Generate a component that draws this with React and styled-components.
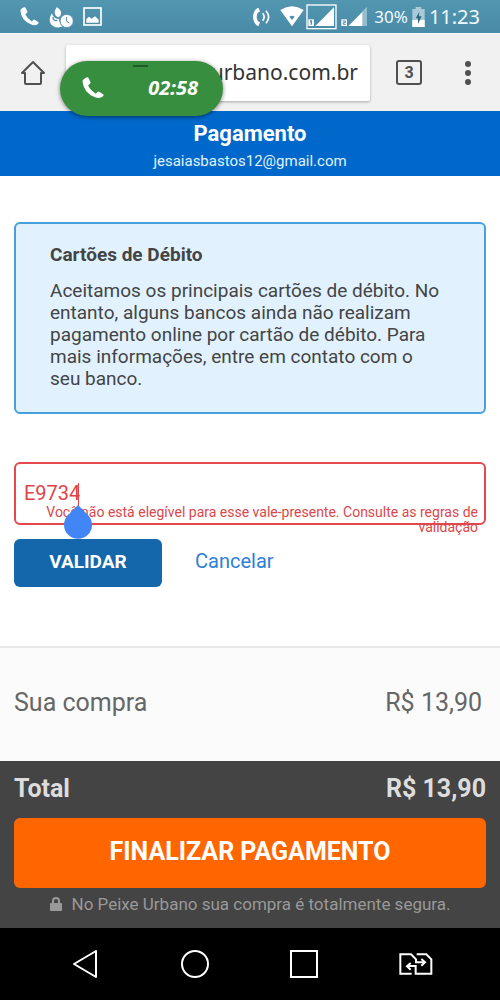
import React from "react";
import styled, { createGlobalStyle } from "styled-components";

const GlobalStyle = createGlobalStyle`
    * {
        box-sizing: border-box;
    }
    body {
        margin: 0;
        background-color: #fff;
        font-family: Roboto, "Liberation Sans", sans-serif;
    }
    h1, h2, p {
        margin: 0;
    }
    svg {
        display: block;
        flex-shrink: 0;
    }
    button, input {
        font-family: inherit;
    }
`;

const Screen = styled.div`
    position: relative;
    display: flex;
    flex-direction: column;
    min-height: 100vh;
`;

/* Status bar */
const StatusBar = styled.div`
    display: flex;
    align-items: center;
    justify-content: space-between;
    height: 33px;
    padding: 0 20px;
    background: linear-gradient(#5296b0, #4a8ba8);
    color: #fff;
    font-family: "Noto Sans", "Open Sans", sans-serif;
`;

const StatusGroup = styled.div`
    display: flex;
    align-items: center;
    gap: ${props => props.$gap}px;
`;

const StatusText = styled.span`
    font-size: ${props => props.$size}px;
    line-height: 32px;
    color: #f1fafc;
`;

/* Browser bar */
const BrowserBar = styled.div`
    display: flex;
    align-items: center;
    height: 78px;
    padding: 0 20px;
    background-color: #f1f1f1;
    border-top: 1px solid #fafafa;
`;

const IconButton = styled.button`
    display: flex;
    align-items: center;
    justify-content: center;
    padding: 0;
    border: 0;
    background: none;
    color: #505050;
`;

const UrlInput = styled.input`
    flex: 1;
    min-width: 0;
    height: 56px;
    margin: 0 26px 0 20px;
    padding: 0 12px 2px;
    border: 0;
    border-radius: 2px;
    background-color: #fff;
    box-shadow: 0 1px 3px rgba(0, 0, 0, 0.3);
    color: #333;
    font-family: "Noto Sans", "Open Sans", sans-serif;
    font-size: 21px;
    text-align: right;
    outline: 0;
`;

const TabsButton = styled(IconButton)`
    width: 26px;
    height: 25px;
    margin-right: 34px;
    border: 2px solid #505050;
    border-radius: 3px;
    font-size: 16px;
    font-weight: bold;
`;

/* Floating call bubble */
const CallBubble = styled.button`
    position: absolute;
    top: 61px;
    left: 60px;
    display: flex;
    align-items: center;
    justify-content: space-between;
    width: 163px;
    height: 55px;
    padding: 0 25px 2px 22px;
    border: 0;
    border-radius: 28px;
    background-color: #388e3f;
    box-shadow: 0 1px 4px rgba(0, 0, 0, 0.5);
    color: #fff;
    font-family: "Noto Sans", "Open Sans", sans-serif;
    font-size: 20px;
    font-style: italic;
    font-weight: bold;
    &::before {
        content: "";
        position: absolute;
        top: 4px;
        left: 73px;
        width: 15px;
        height: 2px;
        background-color: #1d5c24;
    }
`;

/* Page */
const PageHeader = styled.header`
    display: flex;
    flex-direction: column;
    align-items: center;
    height: 65px;
    padding-top: 10px;
    background-color: #0068cb;
    color: #fff;
`;

const PageTitle = styled.h1`
    font-size: 22px;
    line-height: 26px;
`;

const Email = styled.p`
    font-size: 15px;
    line-height: 28px;
    color: #e0f2ff;
`;

const Content = styled.main`
    flex: 1;
    padding: 46px 14px 58px;
`;

const InfoBox = styled.section`
    padding: 20px 38px 22px 34px;
    border: 2px solid #479fdb;
    border-radius: 6px;
    background-color: #e1f2fe;
    color: #444;
`;

const InfoTitle = styled.h2`
    margin-bottom: 14px;
    font-size: 19px;
    line-height: 22px;
`;

const InfoText = styled.p`
    font-size: 19px;
    line-height: 22px;
`;

const VoucherForm = styled.form`
    margin-top: 48px;
`;

const Field = styled.div`
    position: relative;
`;

const VoucherInput = styled.input`
    display: block;
    width: 100%;
    height: 63px;
    padding: 0 8px 2px;
    border: 2px solid #e2484c;
    border-radius: 6px;
    background: none;
    color: #e04347;
    font-size: 20px;
    outline: 0;
`;

const ErrorText = styled.p`
    position: absolute;
    top: 43px;
    right: 8px;
    left: 20px;
    color: #db474b;
    font-size: 14px;
    line-height: 15px;
    text-align: right;
`;

const CaretHandle = styled.svg`
    position: absolute;
    top: 21px;
    left: 50px;
`;

const Actions = styled.div`
    display: flex;
    align-items: center;
    gap: 33px;
    margin-top: 14px;
`;

const ValidateButton = styled.button`
    width: 148px;
    height: 48px;
    padding: 0 0 4px;
    border: 0;
    border-radius: 6px;
    background-color: #1467ab;
    color: #fff;
    font-size: 19px;
    font-weight: bold;
`;

const CancelLink = styled.a`
    padding-bottom: 4px;
    color: #2e7fd8;
    font-size: 20px;
    text-decoration: none;
`;

/* Totals */
const Summary = styled.section`
    display: flex;
    align-items: center;
    justify-content: space-between;
    height: 115px;
    padding: 0 18px 4px 14px;
    border-top: 2px solid #e8e8e8;
    background-color: #fbfbfb;
    color: #666;
    font-size: 25px;
`;

const Checkout = styled.footer`
    height: 167px;
    padding: 13px 14px 0;
    background-color: #444;
`;

const TotalRow = styled.div`
    display: flex;
    justify-content: space-between;
    color: #ddd;
    font-size: 25px;
    font-weight: bold;
    line-height: 30px;
`;

const PayButton = styled.button`
    display: block;
    width: 100%;
    height: 70px;
    margin-top: 14px;
    padding: 0 0 4px;
    border: 0;
    border-radius: 6px;
    background-color: #f60;
    color: #fff;
    font-size: 25px;
    font-weight: bold;
`;

const SecureNote = styled.p`
    display: flex;
    align-items: center;
    justify-content: center;
    gap: 10px;
    margin-top: 5px;
    color: #999;
    font-size: 17px;
    line-height: 22px;
`;

const NavBar = styled.nav`
    display: flex;
    align-items: center;
    justify-content: space-between;
    height: 72px;
    padding: 0 67px 0 72px;
    background-color: #000;
`;

const PhoneIcon = ({ size }) => (
    <svg width={size} height={size} viewBox="0 0 54 54" fill="#fff">
        <path d="M1 9Q5 3 11 1Q15 0 17 4L21 13Q22 16 15 21Q20 32 34 41Q38 35 42 36L51 42Q55 45 51 48Q44 54 32 50Q3 38 1 9Z" />
    </svg>
);

const MissedIcon = () => (
    <svg width="24" height="22" viewBox="0 0 72 66" fill="#fff">
        <path d="M24 3C32 10 40 17 35 27C33 32 28 34 28 34C18 31 11 19 24 3Z" />
        <path d="M9 22C11 31 18 39 30 39C32 52 37 58 42 61C29 67 10 65 4 51C0 41 3 31 9 22Z" />
        <path d="M12 33C11 42 17 45 25 43" fill="none" stroke="#5090ac" strokeWidth="4" />
        <circle cx="53" cy="45" r="20" stroke="#5090ac" strokeWidth="3" />
        <path d="M53 33V46L61 51" fill="none" stroke="#5090ac" strokeWidth="3" />
    </svg>
);

const PictureIcon = () => (
    <svg width="19" height="19" viewBox="0 0 57 57">
        <rect x="3" y="3" width="51" height="51" fill="none" stroke="#fff" strokeWidth="5" />
        <path d="M10 47V36L18 29L26 35L36 28L47 38V47Z" fill="#fff" />
    </svg>
);

const RingIcon = () => (
    <svg width="20" height="22" viewBox="0 0 60 66" fill="none" stroke="#fff">
        <path d="M19 5C-2 14 -2 50 19 61L24 49L17 45C13 37 13 28 17 20L24 16Z" fill="#fff" stroke="none" />
        <path d="M32 22Q41 33 32 44M42 14Q58 33 42 52" strokeWidth="5" />
    </svg>
);

const WifiIcon = () => (
    <svg width="24" height="21" viewBox="0 0 72 63">
        <path d="M1 12Q36 -10 71 12L36 61Z" fill="#fff" />
        <path d="M28 32Q36 27 44 32L36 42Z" fill="#4d8fac" />
    </svg>
);

const SignalIcon = ({ sim, framed }) => (
    <svg width="31" height="26" viewBox="0 0 93 78">
        {framed && <rect x="3" y="3" width="87" height="71" fill="none" stroke="#fff" strokeWidth="4" />}
        <path d="M28 66L84 10V66Z" fill="#fff" />
        {!framed && <path d="M70 24L84 10V66H70Z" fill="#94bdcd" />}
        <rect x="7" y="46" width="17" height="20" fill="#fff" />
        {sim === 1 ? (
            <path d="M12 51H16V62" fill="none" stroke="#4d8fac" strokeWidth="4" />
        ) : (
            <path d="M11 51H19V56H13V61H20" fill="none" stroke="#4d8fac" strokeWidth="3" />
        )}
    </svg>
);

const BatteryIcon = () => (
    <svg width="13" height="20" viewBox="0 0 39 60">
        <path d="M11 0H28V6H38V60H1V6H11Z" fill="#a9cbd7" />
        <rect x="1" y="39" width="37" height="21" fill="#fff" />
        <path d="M22 14L11 34H18V51L29 28H21Z" fill="#34697f" />
    </svg>
);

const HomeIcon = () => (
    <svg width="26" height="26" viewBox="0 0 26 26" fill="none" stroke="#505050" strokeWidth="2" strokeLinejoin="round" strokeLinecap="round">
        <path d="M5 13H2L13 2L24 13H21V23Q21 24 20 24H6Q5 24 5 23Z" />
    </svg>
);

const MenuIcon = () => (
    <svg width="24" height="24" viewBox="0 0 24 24" fill="#505050">
        <circle cx="12" cy="3" r="3" />
        <circle cx="12" cy="12" r="3" />
        <circle cx="12" cy="21" r="3" />
    </svg>
);

const LockIcon = () => (
    <svg width="12" height="14" viewBox="0 0 12 14">
        <rect y="6" width="12" height="8" rx="1" fill="#999" />
        <path d="M3 7V4Q3 1 6 1Q9 1 9 4V7" fill="none" stroke="#999" strokeWidth="2" />
    </svg>
);

const BackIcon = () => (
    <svg width="28" height="28" viewBox="0 0 28 28" fill="none" stroke="#fff" strokeWidth="2">
        <path d="M24 1V27L2 14Z" strokeLinejoin="round" />
    </svg>
);

const CircleIcon = () => (
    <svg width="28" height="28" viewBox="0 0 28 28" fill="none" stroke="#fff" strokeWidth="2">
        <circle cx="14" cy="14" r="13" />
    </svg>
);

const SquareIcon = () => (
    <svg width="28" height="28" viewBox="0 0 28 28" fill="none" stroke="#fff" strokeWidth="2">
        <rect x="1" y="1" width="26" height="26" />
    </svg>
);

const SimSwapIcon = () => (
    <svg width="34" height="22" viewBox="0 0 102 66" fill="none" stroke="#fff" strokeWidth="6">
        <path d="M38 62H4V4H36L51 19V28H76" />
        <path d="M53 4H82L97 19V62H50V39H26" />
        <path d="M67 18L78 28L67 38M35 30L24 40L35 50" />
    </svg>
);

export default () => (
    <>
        <GlobalStyle />
        <Screen>
            <StatusBar>
                <StatusGroup $gap={10}>
                    <PhoneIcon size={19} />
                    <MissedIcon />
                    <PictureIcon />
                </StatusGroup>
                <StatusGroup $gap={4}>
                    <StatusGroup $gap={8}>
                        <RingIcon />
                        <StatusGroup $gap={2}>
                            <WifiIcon />
                            <SignalIcon sim={1} framed />
                            <SignalIcon sim={2} />
                        </StatusGroup>
                    </StatusGroup>
                    <StatusText $size={17}>30%</StatusText>
                    <BatteryIcon />
                    <StatusText $size={20}>11:23</StatusText>
                </StatusGroup>
            </StatusBar>
            <BrowserBar>
                <IconButton type="button" aria-label="Início">
                    <HomeIcon />
                </IconButton>
                <UrlInput type="text" aria-label="Endereço" defaultValue="peixeurbano.com.br" />
                <TabsButton type="button">3</TabsButton>
                <IconButton type="button" aria-label="Menu">
                    <MenuIcon />
                </IconButton>
            </BrowserBar>
            <CallBubble type="button">
                <PhoneIcon size={22} />
                <span>02:58</span>
            </CallBubble>
            <PageHeader>
                <PageTitle>Pagamento</PageTitle>
                <Email>jesaiasbastos12@gmail.com</Email>
            </PageHeader>
            <Content>
                <InfoBox>
                    <InfoTitle>Cartões de Débito</InfoTitle>
                    <InfoText>
                        Aceitamos os principais cartões de débito. No entanto, alguns bancos
                        ainda não realizam pagamento online por cartão de débito. Para mais
                        informações, entre em contato com o seu banco.
                    </InfoText>
                </InfoBox>
                <VoucherForm>
                    <Field>
                        <VoucherInput
                            type="text"
                            aria-label="Vale-presente"
                            aria-describedby="voucher-error"
                            defaultValue="E9734"
                        />
                        <ErrorText id="voucher-error">
                            Você não está elegível para esse vale-presente. Consulte as regras de validação
                        </ErrorText>
                        <CaretHandle width="28" height="56" viewBox="0 0 28 56">
                            <path d="M14.5 0V24" stroke="#e04347" strokeWidth="1" />
                            <path d="M14 22L24 32A14 14 0 1 1 4 32Z" fill="#4285f4" />
                        </CaretHandle>
                    </Field>
                    <Actions>
                        <ValidateButton type="button">VALIDAR</ValidateButton>
                        <CancelLink href="#">Cancelar</CancelLink>
                    </Actions>
                </VoucherForm>
            </Content>
            <Summary>
                <span>Sua compra</span>
                <span>R$ 13,90</span>
            </Summary>
            <Checkout>
                <TotalRow>
                    <span>Total</span>
                    <span>R$ 13,90</span>
                </TotalRow>
                <PayButton type="button">FINALIZAR PAGAMENTO</PayButton>
                <SecureNote>
                    <LockIcon />
                    No Peixe Urbano sua compra é totalmente segura.
                </SecureNote>
            </Checkout>
            <NavBar>
                <IconButton type="button" aria-label="Voltar">
                    <BackIcon />
                </IconButton>
                <IconButton type="button" aria-label="Tela inicial">
                    <CircleIcon />
                </IconButton>
                <IconButton type="button" aria-label="Recentes">
                    <SquareIcon />
                </IconButton>
                <IconButton type="button" aria-label="Trocar chip">
                    <SimSwapIcon />
                </IconButton>
            </NavBar>
        </Screen>
    </>
);
